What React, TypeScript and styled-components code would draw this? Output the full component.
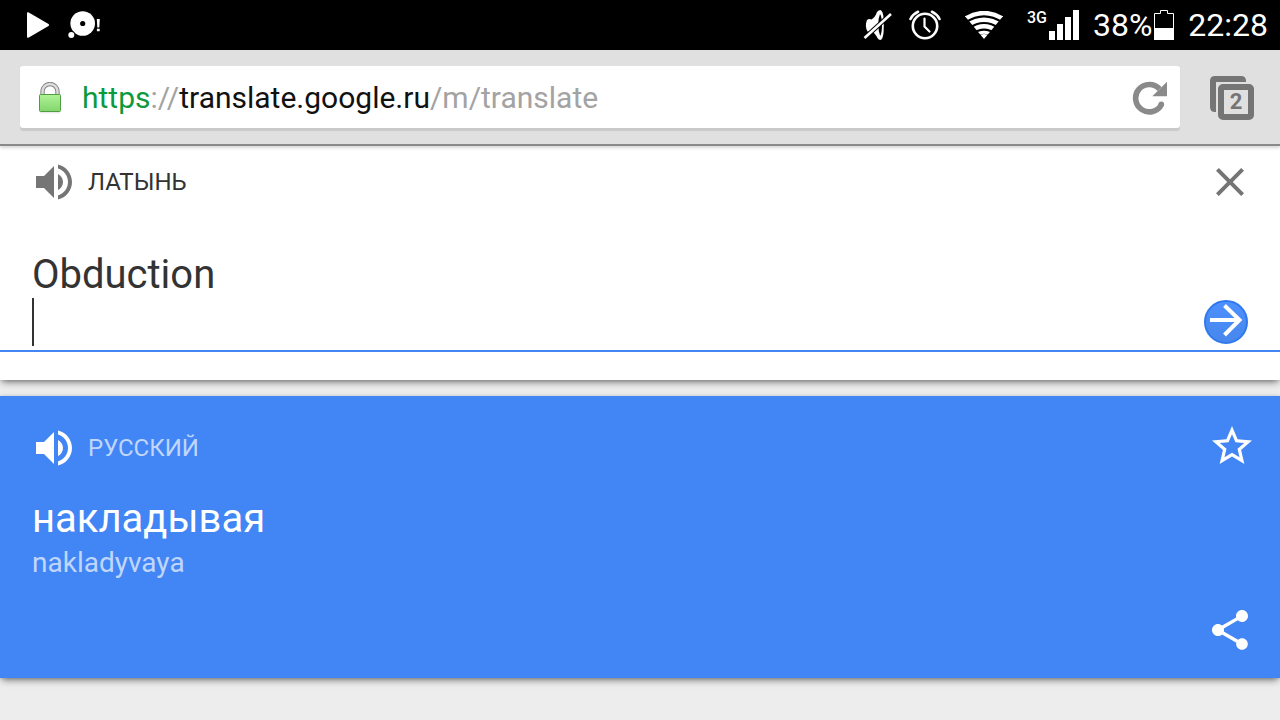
import React, { useState } from "react";
import styled, { createGlobalStyle } from "styled-components";

const GlobalStyle = createGlobalStyle`
  *, *::before, *::after { box-sizing: border-box; }
  body {
    margin: 0;
    background: #ededed;
    color: #333;
    font-family: Roboto, "Noto Sans", sans-serif;
  }
  svg { display: block; flex: none; }
`;

const StatusBar = styled.div`
  display: flex;
  align-items: center;
  justify-content: space-between;
  height: 50px;
  padding: 0 12px 0 26px;
  background: #000;
  color: #fff;
  font-size: 32px;
  line-height: 42px;
`;

const StatusGroup = styled.div<{ $gap: number }>`
  display: flex;
  align-items: center;
  gap: ${(p) => p.$gap}px;
`;

const NetworkLabel = styled.span`
  align-self: flex-start;
  font: 500 16px/16px Roboto, sans-serif;
`;

const Toolbar = styled.header`
  position: relative;
  z-index: 1;
  display: flex;
  align-items: center;
  gap: 30px;
  padding: 16px 26px 16px 20px;
  background: #e0e0e0;
  border-bottom: 2px solid #8a8a8a;
  box-shadow: 0 2px 3px rgba(0, 0, 0, 0.16);
`;

const AddressBar = styled.div`
  flex: 1;
  display: flex;
  align-items: center;
  gap: 20px;
  height: 62px;
  padding: 2px 12px 0 18px;
  background: #fff;
  border-radius: 3px;
  box-shadow: 0 3px 1px rgba(0, 0, 0, 0.1);
`;

const Url = styled.div`
  flex: 1;
  min-width: 0;
  color: #a3a3a3;
  font-size: 30px;
  line-height: 40px;
  white-space: nowrap;
  overflow: hidden;
  outline: none;
`;

const UrlPart = styled.span<{ $color: string }>`
  color: ${(p) => p.$color};
`;

const IconButton = styled.button`
  display: flex;
  flex: none;
  padding: 0;
  border: 0;
  background: none;
  color: inherit;
  cursor: pointer;
`;

const TabsButton = styled(IconButton)`
  position: relative;
  padding-top: 2px;
  color: #757575;
`;

const TabCount = styled.span`
  position: absolute;
  inset: 10px 0 0 8px;
  font: 700 22px/36px Roboto, sans-serif;
  text-align: center;
`;

const shadow = "0 4px 7px -2px rgba(0, 0, 0, 0.5), 0 0 4px rgba(0, 0, 0, 0.16)";

const Page = styled.main`
  padding-bottom: 42px;
`;

const SourceCard = styled.section`
  padding-bottom: 28px;
  background: #fff;
  box-shadow: ${shadow};
`;

const CardHead = styled.div<{ $color: string }>`
  display: flex;
  align-items: center;
  justify-content: space-between;
  height: 72px;
  padding: 0 26px 0 30px;
  color: ${(p) => p.$color};
`;

const Language = styled.div`
  display: flex;
  align-items: center;
  gap: 10px;
`;

const LanguageName = styled.label<{ $color: string }>`
  color: ${(p) => p.$color};
  font-size: 24px;
  line-height: 32px;
`;

const InputRow = styled.div`
  position: relative;
  display: flex;
  align-items: flex-end;
  gap: 20px;
  margin-top: 32px;
  padding: 0 32px 4px;
  border-bottom: 2px solid #4285f4;
`;

const SourceText = styled.textarea`
  flex: 1;
  display: block;
  height: 96px;
  padding: 1px 0 0;
  border: 0;
  outline: none;
  resize: none;
  background: transparent;
  color: #333;
  caret-color: transparent;
  font: 400 40px/48px Roboto, sans-serif;
  overflow: hidden;
`;

const Caret = styled.span`
  position: absolute;
  left: 32px;
  bottom: 4px;
  width: 2px;
  height: 48px;
  background: #333;
`;

const GoButton = styled(IconButton)`
  width: 44px;
  height: 44px;
  margin-bottom: 2px;
  border: 2px solid #3079ed;
  border-radius: 50%;
  background: linear-gradient(#4d90fe, #4787ed);
  color: #fff;
`;

const ResultCard = styled.section`
  margin-top: 16px;
  padding: 16px 0 24px;
  background: #4285f4;
  color: #fff;
  box-shadow: ${shadow};
`;

const Result = styled.div`
  padding: 11px 32px 0;
`;

const Translation = styled.p`
  margin: 0;
  font-size: 40px;
  line-height: 48px;
`;

const Transliteration = styled.p`
  margin: 0;
  color: #c0d6fb;
  font-size: 28px;
  line-height: 40px;
`;

const ResultActions = styled.div`
  display: flex;
  justify-content: flex-end;
  padding: 23px 26px 0;
`;

const Glyph = ({ d, box = "0 0 48 48" }: { d: string; box?: string }) => (
  <svg width="48" height="48" viewBox={box} fill="currentColor" aria-hidden="true">
    <path d={d} />
  </svg>
);

const volume =
  "M6 18v12h8l10 10V8L14 18H6zm27 6c0-3.53-2.04-6.58-5-8.05v16.11c2.96-1.48 5-4.53 5-8.06zM28 6.46v4.13c5.78 1.72 10 7.07 10 13.41s-4.22 11.69-10 13.41v4.13c8.01-1.82 14-8.97 14-17.54S36.01 8.28 28 6.46z";
const close =
  "M38 12.83L35.17 10 24 21.17 12.83 10 10 12.83 21.17 24 10 35.17 12.83 38 24 26.83 35.17 38 38 35.17 26.83 24z";
const star =
  "M44 18.48l-14.38-1.24L24 4l-5.62 13.26L4 18.48l10.92 9.46L11.64 42 24 34.54 36.36 42l-3.27-14.06L44 18.48zM24 30.8l-7.53 4.55 2-8.56-6.65-5.76 8.76-.75L24 12.2l3.43 8.09 8.76.75-6.65 5.76 2 8.56L24 30.8z";
const share =
  "M36 32.17c-1.52 0-2.89.59-3.93 1.54L17.82 25.4c.11-.45.18-.92.18-1.4s-.07-.95-.18-1.4l14.1-8.23c1.07 1 2.5 1.62 4.08 1.62 3.31 0 6-2.69 6-6s-2.69-6-6-6-6 2.69-6 6c0 .48.07.95.18 1.4l-14.1 8.23c-1.07-1-2.5-1.62-4.08-1.62-3.31 0-6 2.69-6 6s2.69 6 6 6c1.58 0 3.01-.62 4.08-1.62l14.25 8.31c-.1.42-.16.86-.16 1.31 0 3.22 2.61 5.83 5.83 5.83s5.83-2.61 5.83-5.83-2.61-5.83-5.83-5.83z";

const PlayIcon = () => (
  <svg width="24" height="26" viewBox="0 0 24 26" fill="#fff">
    <path d="M1 1.5Q1 -.4 2.8.6L22.5 12q1.2 1 0 2L2.8 25.4Q1 26.400 1 24.500Z" />
  </svg>
);

const DiscIcon = () => (
  <svg width="32" height="30" viewBox="0 0 32 30" fill="#fff">
    <circle cx="14.700" cy="13.500" r="12.300" />
    <circle cx="14.700" cy="13.500" r="2.600" fill="#000" />
    <circle cx="3.300" cy="25" r="3.900" fill="#000" />
    <circle cx="3.300" cy="25" r="3" />
    <path d="M28.800 9h3l-.5 8.500h-2zM28.900 18.800h2.800v2.400h-2.800z" />
  </svg>
);

const MuteIcon = () => (
  <svg width="30" height="32" viewBox="0 0 30 32">
    <path d="M4 11Q6 9.500 8.500 10.500Q12 8.500 14 3Q15.500 1 17.500 1Q20 2 20.600 9Q21 16 20.600 23Q20 30 17.500 31Q15.500 31 14.500 29Q12 24 9 22.500H4.500Q1.500 17 4 11Z" fill="#fff" />
    <path d="M17 5Q19 8 19 15.500Q19 24 17.200 27Q15.300 22 15.300 15.500Q15.300 9 17 5Z" fill="#000" />
    <path d="M1.500 29L28 5" stroke="#000" strokeWidth="4.600" />
    <path d="M1.500 29L28 5" stroke="#fff" strokeWidth="2.600" />
  </svg>
);

const AlarmIcon = () => (
  <svg width="32" height="30" viewBox="0 0 32 30" fill="none" stroke="#fff" strokeWidth="2.600" strokeLinecap="round">
    <circle cx="16" cy="16" r="12.200" />
    <path d="M15.500 8.500V16.500L20.500 21.500" strokeWidth="2.200" />
    <path d="M1.500 9Q4 4 9 1.800M30.500 9Q28 4 23 1.800" />
  </svg>
);

const WifiIcon = () => (
  <svg width="38" height="28" viewBox="0 0 38 28">
    <clipPath id="fan">
      <path d="M19 28L-1 4V-2H39V4Z" />
    </clipPath>
    <g clipPath="url(#fan)" fill="none" stroke="#fff" strokeWidth="4.400">
      <path d="M-1 8.500Q19 -4.500 39 8.500" />
      <path d="M2 14.500Q19 3 36 14.500" />
      <path d="M6 20Q19 10.500 32 20" />
      <path d="M9 25Q19 17.500 29 25" strokeWidth="3" />
      <path d="M13 24.500Q19 21.500 25 24.500V30H13Z" fill="#fff" stroke="none" />
    </g>
  </svg>
);

const SignalIcon = () => (
  <svg width="30" height="30" viewBox="0 0 30 30" fill="#fff">
    <path d="M0 21h6v9H0zM8 14h6v16H8zM16 7h6v23h-6zM24 0h6v30h-6z" />
  </svg>
);

const BatteryIcon = () => (
  <svg width="20" height="30" viewBox="0 0 20 30">
    <path d="M.5 29.500V3.500H6.500V.5H13.500V3.500H19.500V29.500Z" fill="none" stroke="#fff" />
    <path d="M0 18h20v12H0z" fill="#fff" />
  </svg>
);

const LockIcon = () => (
  <svg width="24" height="32" viewBox="0 0 24 32">
    <defs>
      <linearGradient id="lockBody" x1="0" y1="0" x2="0" y2="1">
        <stop offset="0" stopColor="#aef396" />
        <stop offset="1" stopColor="#83d56c" />
      </linearGradient>
    </defs>
    <path d="M4.500 13V9.500a7.500 7.500 0 0 1 15 0V13" fill="none" stroke="#858585" strokeWidth="4.400" />
    <path d="M4.500 13V9.500a7.500 7.500 0 0 1 15 0V13" fill="none" stroke="#dcdcdc" strokeWidth="2.400" />
    <rect x="1.500" y="12.500" width="21" height="17" rx="1" fill="url(#lockBody)" stroke="#4f9c43" />
    <path d="M2 30.800h20" stroke="#000" strokeOpacity=".12" />
  </svg>
);

const ReloadIcon = () => (
  <svg width="36" height="36" viewBox="0 0 36 36">
    <path d="M27.500 9A13.700 13.700 0 1 0 29.500 24.500" fill="none" stroke="#8a8a8a" strokeWidth="5.600" />
    <circle cx="29.300" cy="24.300" r="2.800" fill="#8a8a8a" />
    <path d="M35 1.700V16.300H20.300Z" fill="#8a8a8a" />
  </svg>
);

const TabsIcon = () => (
  <svg width="44" height="44" viewBox="0 0 44 44" fill="currentColor">
    <path d="M5 0H31Q36 0 36 5V6H6V36H5Q0 36 0 31V5Q0 0 5 0Z" />
    <rect x="11" y="11" width="30" height="30" rx="2" fill="none" stroke="currentColor" strokeWidth="6" />
  </svg>
);

const ArrowIcon = () => (
  <svg width="40" height="40" viewBox="0 0 40 40" fill="none" stroke="currentColor" strokeWidth="4">
    <path d="M4 18H34M18.500 3.500L33.500 18L18.500 33" />
  </svg>
);

export default function App() {
  const [source, setSource] = useState("Obduction\n");

  return (
    <>
      <GlobalStyle />
      <StatusBar>
        <StatusGroup $gap={18}>
          <PlayIcon />
          <DiscIcon />
        </StatusGroup>
        <StatusGroup $gap={14}>
          <StatusGroup $gap={24}>
            <StatusGroup $gap={16}>
              <MuteIcon />
              <AlarmIcon />
            </StatusGroup>
            <WifiIcon />
            <StatusGroup $gap={2}>
              <NetworkLabel>3G</NetworkLabel>
              <SignalIcon />
            </StatusGroup>
          </StatusGroup>
          <StatusGroup $gap={2}>
            <span>38%</span>
            <BatteryIcon />
          </StatusGroup>
          <time>22:28</time>
        </StatusGroup>
      </StatusBar>

      <Toolbar>
        <AddressBar>
          <LockIcon />
          <Url role="textbox" aria-label="Адрес" contentEditable suppressContentEditableWarning spellCheck={false}>
            <UrlPart $color="#0b9a3d">https</UrlPart>://
            <UrlPart $color="#111">translate.google.ru</UrlPart>/m/translate
          </Url>
          <IconButton aria-label="Обновить">
            <ReloadIcon />
          </IconButton>
        </AddressBar>
        <TabsButton aria-label="Вкладки">
          <TabsIcon />
          <TabCount>2</TabCount>
        </TabsButton>
      </Toolbar>

      <Page>
        <SourceCard>
          <CardHead $color="#757575">
            <Language>
              <IconButton aria-label="Прослушать">
                <Glyph d={volume} />
              </IconButton>
              <LanguageName htmlFor="source" $color="#333">ЛАТЫНЬ</LanguageName>
            </Language>
            <IconButton aria-label="Очистить" onClick={() => setSource("")}>
              <Glyph d={close} />
            </IconButton>
          </CardHead>
          <InputRow>
            <SourceText
              id="source"
              value={source}
              spellCheck={false}
              onChange={(e) => setSource(e.target.value)}
            />
            <Caret />
            <GoButton aria-label="Перевести">
              <ArrowIcon />
            </GoButton>
          </InputRow>
        </SourceCard>

        <ResultCard>
          <CardHead $color="#fff">
            <Language>
              <IconButton aria-label="Прослушать">
                <Glyph d={volume} />
              </IconButton>
              <LanguageName as="span" $color="#c0d6fb">РУССКИЙ</LanguageName>
            </Language>
            <IconButton aria-label="В избранное">
              <Glyph d={star} box="-2 2 48 48" />
            </IconButton>
          </CardHead>
          <Result>
            <Translation>накладывая</Translation>
            <Transliteration>nakladyvaya</Transliteration>
          </Result>
          <ResultActions>
            <IconButton aria-label="Поделиться">
              <Glyph d={share} />
            </IconButton>
          </ResultActions>
        </ResultCard>
      </Page>
    </>
  );
}
